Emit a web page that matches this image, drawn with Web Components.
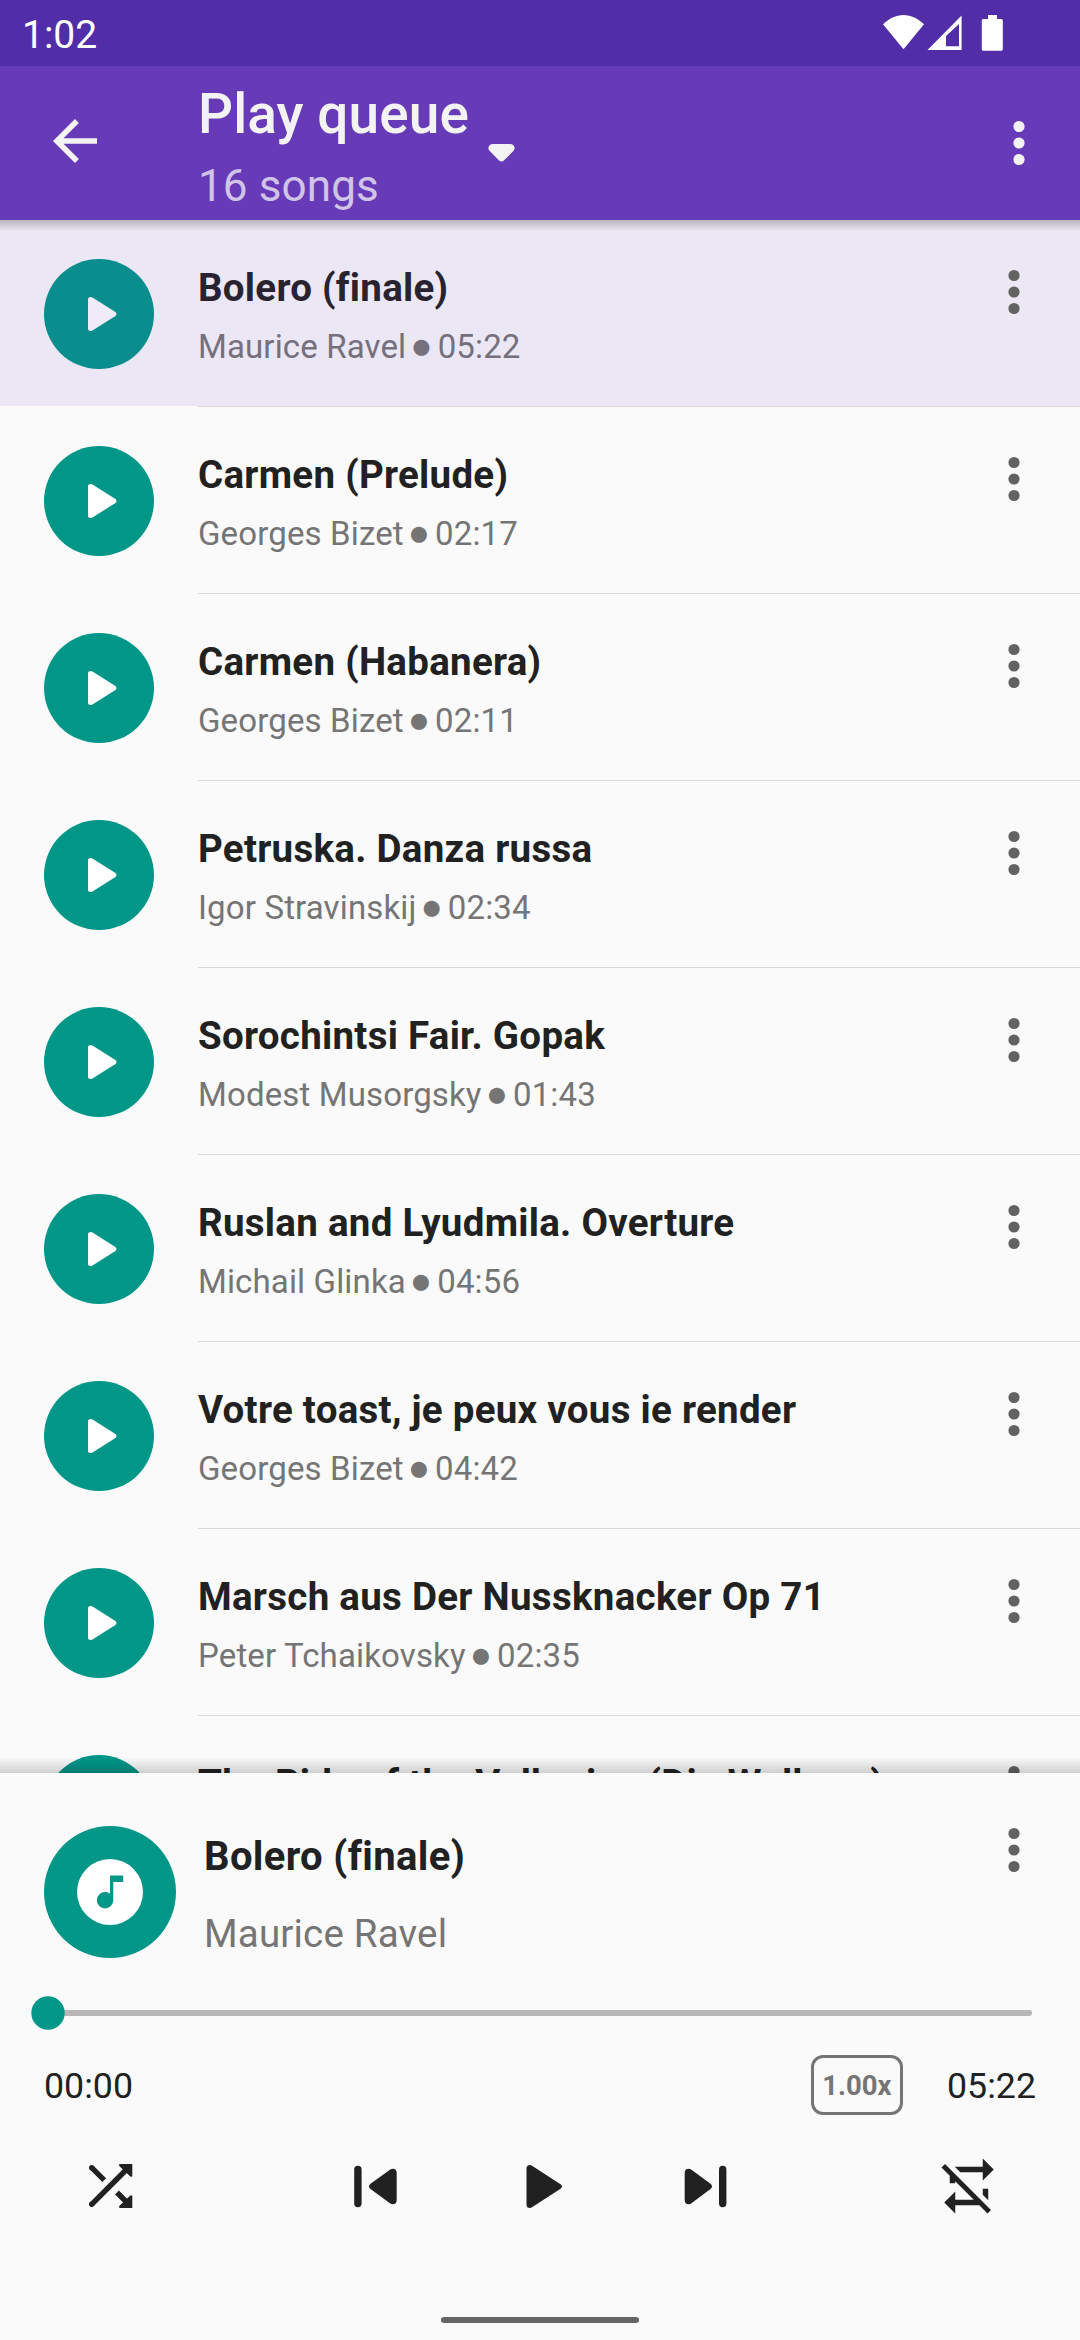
<!DOCTYPE html>
<html lang="en">
<head>
<meta charset="utf-8">
<title>Play queue</title>
<style>
html,body{margin:0;padding:0;background:#fafafa}
body{width:1080px;height:2340px;overflow:hidden;font-family:Roboto,sans-serif}
</style>
</head>
<body>
<music-app></music-app>
<script>
const define = (name, html, setup) => {
  const tpl = document.createElement('template');
  tpl.innerHTML = html;
  customElements.define(name, class extends HTMLElement {
    constructor() {
      super();
      this.attachShadow({ mode: 'open' }).appendChild(tpl.content.cloneNode(true));
    }
    connectedCallback() { if (setup) setup(this, this.shadowRoot); }
  });
};

define('more-button', `
<style>:host{display:block;width:12px;height:46px}svg{display:block}</style>
<svg width="12" height="46" viewBox="0 0 12 46" fill="currentColor"><circle cx="6" cy="6.500" r="5.600"/><circle cx="6" cy="23" r="5.600"/><circle cx="6" cy="39.500" r="5.600"/></svg>`);

define('status-bar', `
<style>
:host{display:flex;box-sizing:border-box;height:66px;background:#512da8;color:#fff;padding:0 77px 0 22px;justify-content:space-between}
.t{font-size:39px;line-height:46px;padding-top:12px}
svg{display:block}
</style>
<span class="t">1:02</span>
<svg width="121" height="66" viewBox="882 0 121 66" fill="#fff">
<path d="M883 24.300C889 18.500 896 15 903.500 15S918 18.500 924 24.300L903.500 49.300Z"/>
<path fill-rule="evenodd" d="M927.500 50L961.600 15.500V50ZM946 46.300H959V24L946 36Z"/>
<path d="M988 15h9v4h4.300q1.500 0 1.500 1.500v28.800q0 1.500-1.500 1.500h-18q-1.500 0-1.500-1.500v-28.800q0-1.500 1.500-1.500h4.700z"/>
</svg>`);

define('app-bar', `
<style>
:host{display:flex;box-sizing:border-box;height:154px;background:#673ab7;color:#f3f3f3;padding:0 55px 0 42px;position:relative;z-index:2}
:host::after{content:"";position:absolute;left:0;right:0;top:154px;height:11px;background:linear-gradient(rgba(0,0,0,.21),rgba(0,0,0,.13) 45%,rgba(0,0,0,0))}
.back{margin-top:42px;width:66px;height:66px}
.titles{margin-left:90px;padding-top:16px}
h1{margin:0;font-weight:500;font-size:55px;line-height:64px;letter-spacing:.08px}
p{margin:0;font-size:44px;line-height:52px;margin-top:14px;color:#d1c4e9;letter-spacing:.12px}
.caret{margin:78px 0 0 19px;width:27px;height:18.500px}
more-button{margin:54px 0 0 auto}
</style>
<svg class="back" viewBox="0 0 24 24" fill="currentColor"><path d="M20 11H7.830l5.590-5.590L12 4l-8 8 8 8 1.410-1.410L7.830 13H20z"/></svg>
<div class="titles"><h1>Play queue</h1><p>16 songs</p></div>
<svg class="caret" viewBox="0 0 28 19" fill="currentColor"><path d="M5 0H23C27 0 29 4 26.500 7L17 16.500Q14 19.800 11 16.500L1.500 7C-1 4 1 0 5 0Z"/></svg>
<more-button></more-button>`);

define('song-row', `
<style>
:host{display:flex;box-sizing:border-box;height:187px;flex:none;padding:0 60px 0 44px;position:relative;--title:#212121;--sub:#757575;--disc:#009688;--glyph:#fff}
:host([active]){background:linear-gradient(#ebe7f4,#ebe7f4) 0 0/100% 186px no-repeat;--title:#28232f;--sub:#75707c;--disc:#0a8d8d;--glyph:#efebf8}
:host::after{content:"";position:absolute;left:198px;right:0;bottom:0;height:1px;background:#dadada}
.disc{margin-top:39px;width:110px;height:110px}
.text{margin-left:44px;padding-top:45px;white-space:nowrap}
.title{font-weight:700;font-size:38.500px;line-height:46px;letter-spacing:.28px;color:var(--title)}
.sub{font-size:33px;line-height:40px;height:40px;margin-top:16px;letter-spacing:.14px;color:var(--sub)}
.dot{font-size:37px;line-height:0;letter-spacing:0;margin:0 5px 0 4px}
more-button{margin:49px 0 0 auto;color:#626262}
</style>
<svg class="disc" viewBox="44 259 110 110"><circle cx="99" cy="314" r="55" fill="var(--disc)"/><path fill="var(--glyph)" d="M88 299.500Q88 297 90.500 297Q91.500 297 92.500 297.600L115 311.700Q116.500 312.700 116.500 314T115 316.300L92.500 330.400Q91.500 331 90.500 331Q88 331 88 328.500Z"/></svg>
<div class="text"><div class="title"></div><div class="sub"></div></div>
<more-button></more-button>`, (el, root) => {
  root.querySelector('.title').textContent = el.getAttribute('name');
  if (el.hasAttribute('artist')) {
    const dot = document.createElement('span');
    dot.className = 'dot';
    dot.textContent = '\u25CF';
    root.querySelector('.sub').append(el.getAttribute('artist'), dot, el.getAttribute('time'));
  }
});

define('play-list', `
<style>:host{display:flex;flex-direction:column;height:1553px;overflow:hidden;background:#fafafa}</style>
<slot></slot>`);

define('seek-bar', `
<style>
:host{display:block;height:34px}
svg{display:block}
</style>
<svg width="1080" height="34" viewBox="0 1996 1080 34"><path d="M48 2013H1029" stroke="#b7b7b7" stroke-width="6" stroke-linecap="round"/><circle cx="48" cy="2013" r="16.700" fill="#009688"/></svg>`);

define('player-controls', `
<style>
:host{display:flex;height:66px;padding:0 78px 0 77px;justify-content:space-between;color:#212121}
svg{display:block}
</style>
<svg width="66" height="66" viewBox="77 2153 66 66" fill="currentColor">
<path d="M91.700 2167.700L104.200 2180.200M91.700 2204.300L127 2169M117 2192.500L127 2202.500" stroke="currentColor" stroke-width="5.400" fill="none"/><circle cx="91.700" cy="2167.700" r="2.700"/><circle cx="91.700" cy="2204.300" r="2.700"/>
<path d="M120.500 2164H132.300V2176.300Q131 2177.500 129.800 2176L119.500 2166.200Q118 2164 120.500 2164ZM120.500 2208H132.300V2195.700Q131 2194.500 129.800 2196L119.500 2205.800Q118 2208 120.500 2208Z"/></svg>
<svg width="380" height="66" viewBox="350 2153 380 66" fill="currentColor">
<rect x="354.200" y="2165.700" width="7.400" height="41.600" rx="3.700"/>
<path d="M392.800 2168.700Q396.700 2168.700 396.700 2173V2200Q396.700 2204.200 392.800 2204.200Q391.300 2204.200 390.300 2203.500L370.500 2189Q369 2187.800 369 2186.400T370.500 2183.800L390.300 2169.400Q391.300 2168.700 392.800 2168.700Z"/>
<path d="M526.500 2168.500Q526.500 2165 530 2165Q531 2165 532 2165.700L560.500 2184.200Q562 2185.200 562 2186.500T560.500 2188.800L532 2207.300Q531 2208 530 2208Q526.500 2208 526.500 2204.500Z"/>
<path d="M688.600 2168.700Q684.700 2168.700 684.700 2173V2200Q684.700 2204.200 688.600 2204.200Q690.100 2204.200 691.100 2203.500L710.500 2189Q712 2187.800 712 2186.400T710.500 2183.800L691.100 2169.400Q690.100 2168.700 688.600 2168.700Z"/>
<rect x="719" y="2165.700" width="7.400" height="41.600" rx="3.700"/></svg>
<svg width="66" height="66" viewBox="0 0 24 24" fill="currentColor"><path d="M2 5.270L3.280 4L20 20.720L18.730 22L15.730 19H7V22L3 18L7 14V17H13.730L7 10.270V11H5V8.270L2 5.270M17 13H19V17.180L17 15.180V13M17 5V2L21 6L17 10V7H8.820L6.820 5H17Z"/></svg>`);

define('player-panel', `
<style>
:host{display:flex;flex-direction:column;box-sizing:border-box;height:567px;background:#fafafa;position:relative}
:host::before{content:"";position:absolute;left:0;right:0;top:-16px;height:16px;background:linear-gradient(rgba(0,0,0,0),rgba(0,0,0,.17))}
.now{display:flex;height:132px;padding:53px 60px 0 44px}
.names{margin-left:28px;padding-top:7px}
.title{font-weight:700;font-size:40px;line-height:48px;letter-spacing:.35px;color:#212121}
.artist{font-size:38.500px;line-height:46px;margin-top:30px;letter-spacing:.18px;color:#757575}
more-button{margin:1px 0 0 auto;color:#626262}
seek-bar{margin-top:38px}
.times{display:flex;height:60px;margin-top:25px;padding:0 44px;font-size:35.750px;line-height:62px;color:#212121}
.speed{box-sizing:border-box;width:92px;height:60px;border:3px solid #757575;border-radius:12px;margin:0 44px 0 auto;font-size:27.500px;line-height:56px;font-weight:700;color:#757575;text-align:center}
player-controls{margin-top:38px}
.home{width:198px;height:6px;border-radius:3px;background:#666;margin:98px auto 0}
</style>
<div class="now">
<svg width="132" height="132" viewBox="0 0 40 40"><circle cx="20" cy="20" r="20" fill="#009688"/><path transform="translate(8 8)" fill="#fff" d="M16 9V7H12V12.500C11.580 12.190 11.070 12 10.500 12A2.500 2.500 0 0 0 8 14.500A2.500 2.500 0 0 0 10.500 17A2.500 2.500 0 0 0 13 14.500V9H16M12 2A10 10 0 0 1 22 12A10 10 0 0 1 12 22A10 10 0 0 1 2 12A10 10 0 0 1 12 2Z"/></svg>
<div class="names"><div class="title">Bolero (finale)</div><div class="artist">Maurice Ravel</div></div>
<more-button></more-button>
</div>
<seek-bar></seek-bar>
<div class="times"><span>00:00</span><span class="speed">1.00x</span><span>05:22</span></div>
<player-controls></player-controls>
<div class="home"></div>`);

define('music-app', `
<style>:host{display:flex;flex-direction:column;width:1080px;height:2340px}</style>
<status-bar></status-bar>
<app-bar></app-bar>
<play-list>
<song-row active name="Bolero (finale)" artist="Maurice Ravel" time="05:22"></song-row>
<song-row name="Carmen (Prelude)" artist="Georges Bizet" time="02:17"></song-row>
<song-row name="Carmen (Habanera)" artist="Georges Bizet" time="02:11"></song-row>
<song-row name="Petruska. Danza russa" artist="Igor Stravinskij" time="02:34"></song-row>
<song-row name="Sorochintsi Fair. Gopak" artist="Modest Musorgsky" time="01:43"></song-row>
<song-row name="Ruslan and Lyudmila. Overture" artist="Michail Glinka" time="04:56"></song-row>
<song-row name="Votre toast, je peux vous ie render" artist="Georges Bizet" time="04:42"></song-row>
<song-row name="Marsch aus Der Nussknacker Op 71" artist="Peter Tchaikovsky" time="02:35"></song-row>
<song-row name="The Ride of the Valkyries (Die Walkure)"></song-row>
</play-list>
<player-panel></player-panel>`);
</script>
</body>
</html>
